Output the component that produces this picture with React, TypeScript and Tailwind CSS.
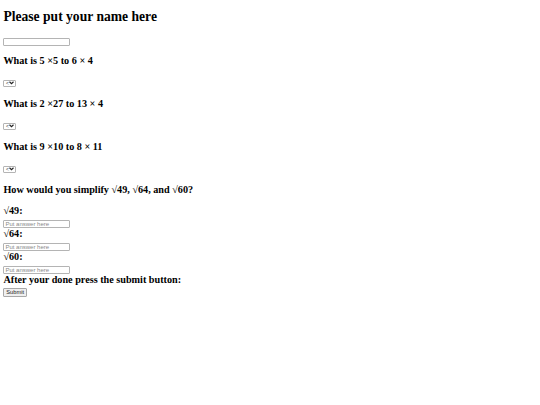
import React from "react";

const serif = "font-['Liberation_Serif','Times_New_Roman',serif]";
const sans = "font-['Liberation_Sans',Arial,sans-serif]";

function Select() {
  return (
    <div className={`flex h-[7px] w-[13px] items-center justify-between rounded-[1px] border border-[#b4b4b4] bg-white pl-[1.5px] pr-[1px] ${sans}`}>
      <span className="text-[5px] leading-[5px] text-[#333]">&lt;</span>
      <svg width="5" height="4" viewBox="0 0 10 8">
        <path d="M1 1.5 L5 5.5 L9 1.5" fill="none" stroke="#222" strokeWidth="2.2" />
      </svg>
    </div>
  );
}

function TextInput({ placeholder }: { placeholder?: string }) {
  return (
    <input
      placeholder={placeholder}
      className={`block h-[8px] w-[67px] rounded-[1px] border border-[#b4b4b4] bg-white px-[1px] text-[6px] leading-[6px] text-black placeholder:text-[#8a8a8a] outline-none ${sans}`}
    />
  );
}

function Q({ children, className = "" }: { children: React.ReactNode; className?: string }) {
  return <h2 className={`text-[10.2px] font-bold leading-[12px] text-black ${className}`}>{children}</h2>;
}

export default function App() {
  return (
    <div className={`min-h-[405px] w-[540px] bg-white pl-[3.4px] pt-[9px] ${serif}`}>
      <h1 className="text-[13.6px] font-bold leading-[16px] text-black">Please put your name here</h1>
      <div className="mt-[13px]">
        <TextInput />
      </div>
      <Q className="mt-[8.6px]">What is 5 ×5 to 6 × 4</Q>
      <div className="mt-[13.4px]">
        <Select />
      </div>
      <Q className="mt-[10.6px]">What is 2 ×27 to 13 × 4</Q>
      <div className="mt-[13.4px]">
        <Select />
      </div>
      <Q className="mt-[10.6px]">What is 9 ×10 to 8 × 11</Q>
      <div className="mt-[13.4px]">
        <Select />
      </div>
      <Q className="mt-[11px]">How would you simplify √49, √64, and √60?</Q>
      <Q className="mt-[9.5px]">√49:</Q>
      <div className="mt-[3px]">
        <TextInput placeholder="Put answer here" />
      </div>
      <Q>√64:</Q>
      <div className="mt-[3px]">
        <TextInput placeholder="Put answer here" />
      </div>
      <Q>√60:</Q>
      <div className="mt-[3px]">
        <TextInput placeholder="Put answer here" />
      </div>
      <Q>After your done press the submit button:</Q>
      <button
        className={`mt-[2px] block h-[8.5px] w-[23.5px] rounded-[1px] border border-[#a8a8a8] bg-[#efefef] text-[5.7px] leading-[5.7px] text-[#222] ${sans}`}
      >
        Submit
      </button>
    </div>
  );
}
